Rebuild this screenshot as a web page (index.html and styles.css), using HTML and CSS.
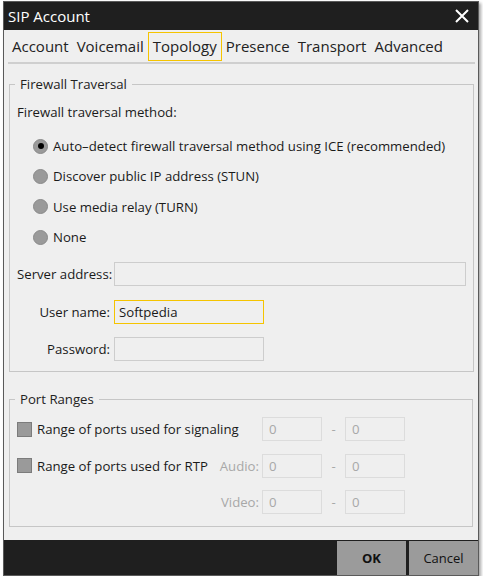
FILE: index.html
```html
<!DOCTYPE html>
<html lang="en">
<head>
    <meta charset="UTF-8">
    <title>SIP Account</title>
    <link rel="stylesheet" href="styles.css">
</head>
<body>
    <div class="window">
        <div class="titlebar">
            <span class="title">SIP Account</span>
            <svg class="close" width="14" height="14" viewBox="0 0 14 14">
                <path d="M1 1 L13 13 M13 1 L1 13" stroke="#fff" stroke-width="2"/>
            </svg>
        </div>

        <div class="tabs">
            <span class="tab">Account</span>
            <span class="tab">Voicemail</span>
            <span class="tab active">Topology</span>
            <span class="tab">Presence</span>
            <span class="tab">Transport</span>
            <span class="tab">Advanced</span>
        </div>

        <div class="content">
            <fieldset class="group firewall">
                <legend>Firewall Traversal</legend>
                <p class="caption">Firewall traversal method:</p>
                <div class="radios">
                    <label class="radio"><span class="dot checked"></span>Auto–detect firewall traversal method using ICE (recommended)</label>
                    <label class="radio"><span class="dot"></span>Discover public IP address (STUN)</label>
                    <label class="radio"><span class="dot"></span>Use media relay (TURN)</label>
                    <label class="radio"><span class="dot"></span>None</label>
                </div>
                <div class="form">
                    <span class="lbl">Server address:</span>
                    <div class="field wide"></div>
                    <span class="lbl">User name:</span>
                    <div class="field short focus">Softpedia</div>
                    <span class="lbl">Password:</span>
                    <div class="field short"></div>
                </div>
            </fieldset>

            <fieldset class="group ports">
                <legend>Port Ranges</legend>
                <div class="portrow">
                    <div class="pleft">
                        <span class="check"></span>
                        <span class="plabel">Range of ports used for signaling</span>
                    </div>
                    <div class="num">0</div>
                    <span class="dash">-</span>
                    <div class="num">0</div>
                </div>
                <div class="portrow">
                    <div class="pleft">
                        <span class="check"></span>
                        <span class="plabel">Range of ports used for RTP</span>
                        <span class="sub">Audio:</span>
                    </div>
                    <div class="num">0</div>
                    <span class="dash">-</span>
                    <div class="num">0</div>
                </div>
                <div class="portrow">
                    <div class="pleft">
                        <span class="sub">Video:</span>
                    </div>
                    <div class="num">0</div>
                    <span class="dash">-</span>
                    <div class="num">0</div>
                </div>
            </fieldset>
        </div>

        <div class="footer">
            <button class="btn ok">OK</button>
            <button class="btn">Cancel</button>
        </div>
    </div>
</body>
</html>
```

FILE: styles.css
```css
body {
    margin: 0;
    background: #ffffff;
    font-family: "Open Sans", "Noto Sans", sans-serif;
    color: #1a1a1a;
}
.window {
    margin: 1px 4px 0 3px;
    width: 474px;
    height: 573px;
    border: 1px solid #5a5a5a;
    background: #efefef;
    display: flex;
    flex-direction: column;
    box-shadow: 2px 2px 3px rgba(0, 0, 0, 0.35);
}
.titlebar {
    height: 28px;
    background: #1f1f1f;
    color: #ffffff;
    display: flex;
    align-items: center;
    justify-content: space-between;
    padding: 0 9px 0 4px;
    font-size: 15px;
}
.tabs {
    display: flex;
    margin: 2px 3px 0 4px;
    height: 29px;
    border-bottom: 2px solid #cfcfcf;
    padding-bottom: 1px;
}
.tab {
    font-size: 15px;
    padding: 0 3px;
    line-height: 27px;
    border: 1px solid transparent;
    color: #222;
}
.active {
    border-color: #f5c400;
    padding: 0 4px;
}
.content {
    flex: 1;
    padding: 11px 5px 0 5px;
}
.group {
    margin: 0;
    border: 1px solid #c6c6c6;
    padding: 0 7px;
    font-size: 13.2px;
}
.group legend {
    padding: 0 5px;
    margin-left: -2px;
    color: #222;
}
.firewall {
    padding-bottom: 10px;
}
.caption {
    margin: 10px 0 0 0;
}
.radios {
    display: flex;
    flex-direction: column;
    gap: 12.4px;
    margin: 16px 0 0 16px;
}
.radio {
    display: flex;
    align-items: center;
    gap: 5px;
    height: 18px;
}
.dot {
    width: 15px;
    height: 15px;
    border-radius: 50%;
    background: #9a9a9a;
    border: 1px solid #8a8a8a;
    box-sizing: border-box;
    display: flex;
    align-items: center;
    justify-content: center;
}
.dot.checked::after {
    content: "";
    width: 6px;
    height: 6px;
    border-radius: 50%;
    background: #000;
}
.form {
    display: grid;
    grid-template-columns: 93px 1fr;
    column-gap: 4px;
    row-gap: 13.5px;
    margin-top: 16px;
    align-items: center;
}
.lbl {
    text-align: right;
    white-space: nowrap;
}
.field {
    height: 24px;
    box-sizing: border-box;
    border: 1px solid #cdcdcd;
    padding: 0 4px;
    line-height: 22px;
}
.wide {
    width: 352px;
}
.short {
    width: 150px;
}
.focus {
    border-color: #f5c400;
}
.ports {
    margin-top: 18px;
    padding-bottom: 12px;
}
.portrow {
    display: flex;
    align-items: center;
    height: 24px;
    margin-top: 12.5px;
}
.portrow:first-of-type {
    margin-top: 9px;
}
.pleft {
    width: 245px;
    display: flex;
    align-items: center;
    white-space: nowrap;
}
.check {
    width: 15px;
    height: 15px;
    flex: none;
    box-sizing: border-box;
    background: #9a9a9a;
    border: 1px solid #7c7c7c;
    margin-right: 5px;
}
.plabel {
    flex: 1;
}
.sub {
    margin-left: auto;
    margin-right: 3px;
    color: #a8a8a8;
}
.num {
    width: 60px;
    height: 24px;
    box-sizing: border-box;
    border: 1px solid #dcdcdc;
    color: #a8a8a8;
    padding-left: 6px;
    line-height: 22px;
}
.dash {
    width: 23px;
    text-align: center;
    color: #a8a8a8;
}
.footer {
    height: 35px;
    background: #1f1f1f;
    display: flex;
    justify-content: flex-end;
    gap: 3px;
    padding-top: 1px;
    box-sizing: border-box;
}
.btn {
    width: 69px;
    border: none;
    background: #9b9b9b;
    font-family: inherit;
    font-size: 13px;
    color: #111;
}
.ok {
    font-weight: bold;
}
```
